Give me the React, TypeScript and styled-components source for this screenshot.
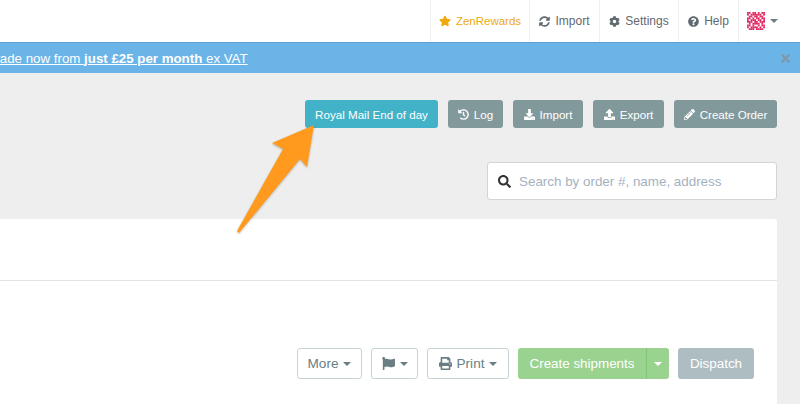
import React from 'react'
import styled, { createGlobalStyle } from 'styled-components'
import {
  FaStar, FaSyncAlt, FaCog, FaQuestionCircle, FaHistory, FaDownload, FaUpload,
  FaPencilAlt, FaSearch, FaFlag, FaPrint, FaTimes,
} from 'react-icons/fa'

const GlobalStyle = createGlobalStyle`
  html, body {
    margin: 0;
    height: 404px;
    overflow: hidden;
    background: #eeeeee;
    font-family: "Liberation Sans", Arial, sans-serif;
  }
`

const Page = styled.div`
  position: relative;
  width: 800px;
  height: 404px;
  overflow: hidden;
`

const TopNav = styled.nav`
  display: flex;
  justify-content: flex-end;
  height: 42px;
  background: #fff;
  padding-right: 9px;
`

const NavItem = styled.a<{ $gold?: boolean; $width: number; $trail?: number }>`
  display: flex;
  align-items: center;
  justify-content: center;
  gap: 5px;
  box-sizing: border-box;
  width: ${p => p.$width}px;
  padding-right: ${p => p.$trail || 0}px;
  border-left: 1px solid #efefef;
  font-size: ${p => (p.$gold ? '11.5px' : '12px')};
  color: ${p => (p.$gold ? '#efa90b' : '#5f6a6f')};
  svg { font-size: ${p => (p.$gold ? '12px' : '11px')}; }
`

const Caret = styled.span<{ $color?: string }>`
  display: inline-block;
  width: 0;
  height: 0;
  border-left: 4px solid transparent;
  border-right: 4px solid transparent;
  border-top: 4px solid ${p => p.$color || '#6a7f84'};
`

const Banner = styled.div`
  display: flex;
  align-items: center;
  justify-content: space-between;
  box-sizing: border-box;
  height: 31px;
  background: #6bb4e8;
  border-top: 1px solid #5ba3d6;
  padding-right: 8px;
  overflow: hidden;
  color: #fff;
`

const BannerLink = styled.a`
  margin-left: -29px;
  font-size: 13.3px;
  text-decoration: underline;
  white-space: nowrap;
  b { font-weight: 700; }
`

const BannerClose = styled.span`
  display: flex;
  color: #7d9ab0;
  font-size: 13px;
`

const Toolbar = styled.div`
  display: flex;
  justify-content: flex-end;
  gap: 10px;
  margin: 27px 23px 0 0;
`

const ToolButton = styled.button<{ $teal?: boolean; $width: number }>`
  display: flex;
  align-items: center;
  justify-content: center;
  gap: 5px;
  box-sizing: border-box;
  width: ${p => p.$width}px;
  height: 28px;
  padding: 0;
  border: none;
  border-radius: 3px;
  background: ${p => (p.$teal ? '#41b2c7' : '#82999c')};
  color: #fff;
  font: 11.6px "Liberation Sans", Arial, sans-serif;
  svg { font-size: 11px; }
`

const SearchBox = styled.div`
  display: flex;
  align-items: center;
  gap: 8px;
  box-sizing: border-box;
  width: 290px;
  height: 38px;
  margin: 34px 23px 0 auto;
  padding-left: 10px;
  background: #fff;
  border: 1px solid #d4d4d4;
  border-radius: 3px;
  color: #333;
  font-size: 13px;
`

const SearchHint = styled.span`
  color: #a5b1bf;
  font-size: 13.4px;
`

const Card = styled.section`
  box-sizing: border-box;
  width: 777px;
  height: 185px;
  margin-top: 19px;
  background: #fff;
  border-radius: 0 3px 0 0;
`

const CardHeader = styled.div`
  height: 61px;
  border-bottom: 1px solid #e4e4e4;
`

const CardActions = styled.div`
  display: flex;
  justify-content: flex-end;
  gap: 9px;
  margin-top: 67px;
  padding-right: 23px;
`

const OutlineButton = styled.button<{ $width: number }>`
  display: flex;
  align-items: center;
  justify-content: center;
  gap: 5px;
  box-sizing: border-box;
  width: ${p => p.$width}px;
  height: 31px;
  padding: 0;
  background: #fff;
  border: 1px solid #c5d3d6;
  border-radius: 3px;
  color: #6a7f84;
  font: 13.6px "Liberation Sans", Arial, sans-serif;
`

const SplitButton = styled.div`
  display: flex;
  height: 31px;
  border-radius: 3px;
  overflow: hidden;
  background: #9ad28f;
  color: #fff;
  font-size: 13.4px;
`

const SplitLabel = styled.span`
  display: flex;
  align-items: center;
  justify-content: center;
  width: 128px;
  border-right: 1px solid #84c478;
`

const SplitCaret = styled.span`
  display: flex;
  align-items: center;
  justify-content: center;
  width: 22px;
`

const MutedButton = styled.span`
  display: flex;
  align-items: center;
  justify-content: center;
  width: 76px;
  height: 31px;
  border-radius: 3px;
  background: #aebdc2;
  color: #fff;
  font-size: 13.4px;
`

const ArrowOverlay = styled.svg`
  position: absolute;
  left: 225px;
  top: 115px;
  filter: drop-shadow(0 1px 1px rgba(0, 0, 0, 0.25));
`

const AvatarSvg = styled.svg`
  filter: blur(0.4px);
`

const cells = [
  '1101101011', '1011111101', '0110110110', '1101011011', '1011101101',
  '1110110111', '0101111010', '1101001011', '1011110101', '0111011110',
]

const Avatar = () => (
  <AvatarSvg width="18" height="18" viewBox="0 0 20 20">
    {cells.flatMap((row, y) =>
      row.split('').map((c, x) =>
        c === '1' ? <rect key={`${x}-${y}`} x={x * 2} y={y * 2} width="2" height="2" fill="#e0265f" /> : null
      )
    )}
  </AvatarSvg>
)

const App = () => (
  <Page>
    <GlobalStyle />
    <TopNav>
      <NavItem $gold $width={99}><FaStar />ZenRewards</NavItem>
      <NavItem $width={70}><FaSyncAlt />Import</NavItem>
      <NavItem $width={79}><FaCog />Settings</NavItem>
      <NavItem $width={60}><FaQuestionCircle />Help</NavItem>
      <NavItem $width={53} $trail={6}><Avatar /><Caret /></NavItem>
    </TopNav>
    <Banner>
      <BannerLink>Upgrade now from <b>just £25 per month</b> ex VAT</BannerLink>
      <BannerClose><FaTimes /></BannerClose>
    </Banner>
    <Toolbar>
      <ToolButton $teal $width={133}>Royal Mail End of day</ToolButton>
      <ToolButton $width={55}><FaHistory />Log</ToolButton>
      <ToolButton $width={70}><FaDownload />Import</ToolButton>
      <ToolButton $width={71}><FaUpload />Export</ToolButton>
      <ToolButton $width={103}><FaPencilAlt />Create Order</ToolButton>
    </Toolbar>
    <SearchBox>
      <FaSearch />
      <SearchHint>Search by order #, name, address</SearchHint>
    </SearchBox>
    <Card>
      <CardHeader />
      <CardActions>
        <OutlineButton $width={65}>More<Caret /></OutlineButton>
        <OutlineButton $width={47}><FaFlag size={13} /><Caret /></OutlineButton>
        <OutlineButton $width={82}><FaPrint size={13} />Print<Caret /></OutlineButton>
        <SplitButton>
          <SplitLabel>Create shipments</SplitLabel>
          <SplitCaret><Caret $color="#fff" /></SplitCaret>
        </SplitButton>
        <MutedButton>Dispatch</MutedButton>
      </CardActions>
    </Card>
    <ArrowOverlay width="100" height="125" viewBox="0 0 100 125">
      <path d="M89 10 L47 28 L58 34 L12 116 L14 118 L75 44 L82 52 Z" fill="#ff9a1e" />
    </ArrowOverlay>
  </Page>
)

export default App
